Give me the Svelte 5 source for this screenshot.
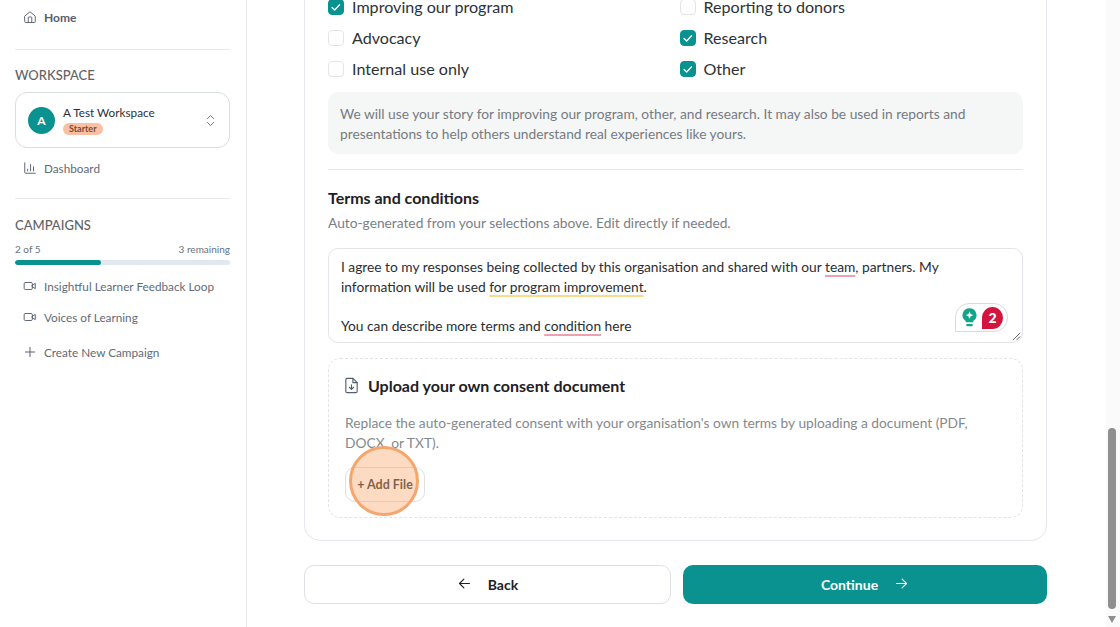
<script>
  const uses = [
    { label: 'Improving our program', checked: true },
    { label: 'Reporting to donors', checked: false },
    { label: 'Advocacy', checked: false },
    { label: 'Research', checked: true },
    { label: 'Internal use only', checked: false },
    { label: 'Other', checked: true }
  ];
  const campaigns = ['Insightful Learner Feedback Loop', 'Voices of Learning'];
</script>

<div class="page">
  <aside class="sidebar">
    <a class="nav home">
      <svg viewBox="0 0 24 24"><path d="M3 10.500 12 3l9 7.500V20a1.500 1.500 0 0 1-1.500 1.500h-15A1.500 1.500 0 0 1 3 20z" /><path d="M9 21.500V13a1 1 0 0 1 1-1h4a1 1 0 0 1 1 1v8.500" /></svg>
      <span>Home</span>
    </a>
    <hr class="rule first" />
    <h2>WORKSPACE</h2>
    <div class="workspace">
      <div class="avatar">A</div>
      <div class="ws-text">
        <div class="ws-name">A Test Workspace</div>
        <span class="badge">Starter</span>
      </div>
      <svg class="updown" viewBox="0 0 24 24"><path d="m7 9 5-5 5 5" /><path d="m7 15 5 5 5-5" /></svg>
    </div>
    <a class="nav dash">
      <svg viewBox="0 0 24 24"><path d="M3 3v16.500a1.500 1.500 0 0 0 1.500 1.500H21" /><path d="M8 17v-3" /><path d="M13 17V6" /><path d="M18 17V10" /></svg>
      <span>Dashboard</span>
    </a>
    <hr class="rule second" />
    <h2 class="campaigns-title">CAMPAIGNS</h2>
    <div class="quota"><span>2 of 5</span><span>3 remaining</span></div>
    <div class="bar"><div class="fill" style="width: 40%"></div></div>
    <div class="campaigns">
      {#each campaigns as name}
        <a class="nav camp">
          <svg viewBox="0 0 24 24"><rect x="2" y="6" width="14" height="12" rx="2" /><path d="m16 10.500 5-3v9l-5-3z" /></svg>
          <span>{name}</span>
        </a>
      {/each}
      <a class="nav create">
        <svg viewBox="0 0 24 24"><path d="M12 4v16" /><path d="M4 12h16" /></svg>
        <span>Create New Campaign</span>
      </a>
    </div>
  </aside>

  <main class="main">
    <section class="card">
      <div class="uses">
        {#each uses as use}
          <label class="use">
            <span class="box" class:on={use.checked}>
              {#if use.checked}
                <svg viewBox="0 0 16 16"><path d="m3.500 8.500 3 3 5.500-6" /></svg>
              {/if}
            </span>
            {use.label}
          </label>
        {/each}
      </div>

      <p class="info">We will use your story for improving our program, other, and research. It may also be used in reports and presentations to help others understand real experiences like yours.</p>

      <hr class="divider" />

      <h3>Terms and conditions</h3>
      <p class="sub">Auto-generated from your selections above. Edit directly if needed.</p>

      <div class="terms">
        <div>I agree to my responses being collected by this organisation and shared with our <span class="err">team</span>, partners. My information will be used <span class="warn">for program improvement</span>.</div>
        <div class="blank"></div>
        <div>You can describe more terms and <span class="err">condition</span> here</div>
        <div class="checker">
          <svg class="bulb" viewBox="0 0 16 20">
            <path d="M8 0a7.500 7.500 0 0 0-4 13.800V15h8v-1.200A7.500 7.500 0 0 0 8 0z" fill="#12a58c" />
            <path d="M8 3.500 9.200 6.300 12 7.500 9.200 8.700 8 11.500 6.800 8.700 4 7.500 6.800 6.300z" fill="#fff" />
            <rect x="4.500" y="17" width="7" height="2.200" rx="1" fill="#12a58c" />
          </svg>
          <span class="count">2</span>
        </div>
        <svg class="grip" viewBox="0 0 10 10"><path d="M9 1 1 9" /><path d="M9 5 5 9" /></svg>
      </div>

      <div class="upload">
        <div class="upload-head">
          <svg viewBox="0 0 24 24"><path d="M14 2H6a2 2 0 0 0-2 2v16a2 2 0 0 0 2 2h12a2 2 0 0 0 2-2V8z" /><path d="M14 2v6h6" /><path d="M12 11v6" /><path d="m9 14.500 3 3 3-3" /></svg>
          <h3>Upload your own consent document</h3>
        </div>
        <p class="upload-text">Replace the auto-generated consent with your organisation's own terms by uploading a document (PDF, DOCX, or TXT).</p>
        <button class="add">+ Add File</button>
        <div class="spot"></div>
      </div>
    </section>

    <div class="actions">
      <button class="back">
        <svg viewBox="0 0 24 24"><path d="M20 12H5" /><path d="m11 5-7 7 7 7" /></svg>
        Back
      </button>
      <button class="continue">
        Continue
        <svg viewBox="0 0 24 24"><path d="M4 12h15" /><path d="m13 5 7 7-7 7" /></svg>
      </button>
    </div>
  </main>

  <div class="scrollbar">
    <div class="thumb"></div>
    <div class="arrow"></div>
  </div>
</div>

<style>
  :global(body) {
    margin: 0;
    background: #fff;
    overflow: hidden;
  }

  .page {
    display: flex;
    height: 627px;
    overflow: hidden;
    font-family: Lato, "Open Sans", sans-serif;
    color: #1f2328;
  }

  .sidebar {
    width: 247px;
    flex: none;
    box-sizing: border-box;
    border-right: 1px solid #e8eaed;
    padding: 0 16px 0 15px;
  }

  .nav {
    display: flex;
    align-items: center;
    gap: 7px;
    padding-left: 8px;
    font-size: 11.750px;
    color: #626b78;
    white-space: nowrap;
  }

  .nav svg {
    width: 14px;
    height: 14px;
    flex: none;
    fill: none;
    stroke: #555e6b;
    stroke-width: 1.600;
    stroke-linecap: round;
    stroke-linejoin: round;
  }

  .home {
    height: 18px;
    margin-top: 8px;
    font-size: 12px;
    font-weight: 700;
    color: #555e6b;
  }

  .rule {
    border: 0;
    border-top: 1px solid #e8eaed;
    margin: 0;
  }

  .rule.first {
    margin-top: 23px;
  }

  .rule.second {
    margin-top: 21px;
  }

  h2 {
    margin: 17px 0 8px;
    font-size: 13px;
    line-height: 17px;
    font-weight: 500;
    color: #5f6368;
  }

  h2.campaigns-title {
    margin-top: 18px;
  }

  .workspace {
    display: flex;
    align-items: center;
    height: 56px;
    box-sizing: border-box;
    border: 1px solid #d8dee4;
    border-radius: 12px;
    padding: 0 11px 0 12px;
  }

  .avatar {
    width: 27px;
    height: 27px;
    border-radius: 50%;
    background: #0a9290;
    color: #fff;
    font-size: 12px;
    font-weight: 700;
    display: flex;
    align-items: center;
    justify-content: center;
    flex: none;
  }

  .ws-text {
    margin-left: 8px;
    flex: 1;
  }

  .ws-name {
    font-size: 11.750px;
    line-height: 15px;
    color: #2c3138;
  }

  .badge {
    display: block;
    width: fit-content;
    margin-top: 3px;
    padding: 0 6px;
    border-radius: 6px;
    background: #fbbfa3;
    color: #7a4a30;
    font-size: 9px;
    font-weight: 700;
    line-height: 12px;
  }

  .updown {
    width: 15px;
    height: 15px;
    fill: none;
    stroke: #6a7280;
    stroke-width: 1.500;
    stroke-linecap: round;
    stroke-linejoin: round;
  }

  .dash {
    height: 18px;
    margin-top: 11px;
  }

  .quota {
    display: flex;
    justify-content: space-between;
    font-size: 10px;
    line-height: 14px;
    color: #6a7280;
    margin-top: 3px;
  }

  .bar {
    height: 5px;
    margin-top: 4px;
    border-radius: 3px;
    background: #e2e8f0;
    overflow: hidden;
  }

  .fill {
    height: 100%;
    border-radius: 3px;
    background: #0a9290;
  }

  .campaigns {
    margin-top: 12px;
    display: flex;
    flex-direction: column;
  }

  .camp {
    height: 18px;
    margin-bottom: 13px;
  }

  .create {
    height: 18px;
    margin-top: 4px;
  }

  .main {
    flex: 1;
    min-width: 0;
    padding: 0 73px 0 57px;
    box-sizing: border-box;
  }

  .card {
    margin-top: -20px;
    height: 561px;
    box-sizing: border-box;
    border: 1px solid #e4e7eb;
    border-radius: 16px;
    padding: 14px 23px 0;
  }

  .uses {
    display: grid;
    grid-template-columns: 1fr 1fr;
    gap: 8px;
  }

  .use {
    display: flex;
    align-items: center;
    gap: 8px;
    height: 23px;
    font-size: 16.100px;
    color: #2d3238;
  }

  .box {
    width: 16px;
    height: 16px;
    box-sizing: border-box;
    border: 1px solid #e3e5e8;
    border-radius: 4px;
    display: flex;
    align-items: center;
    justify-content: center;
    flex: none;
  }

  .box.on {
    background: #0a9290;
    border-color: #0a9290;
  }

  .box svg {
    width: 14px;
    height: 14px;
    flex: none;
    fill: none;
    stroke: #fff;
    stroke-width: 1.500;
    stroke-linecap: round;
    stroke-linejoin: round;
  }

  .info {
    margin: 12px 0 0;
    background: #f5f6f6;
    border-radius: 10px;
    padding: 12px 12px;
    height: 38px;
    font-size: 13.750px;
    line-height: 20px;
    color: #757b82;
  }

  .divider {
    border: 0;
    border-top: 1px solid #e4e7eb;
    margin: 15px 0 0;
  }

  h3 {
    margin: 0;
    font-size: 16px;
    font-weight: 700;
    color: #1d2126;
  }

  .divider + h3 {
    margin-top: 17px;
    line-height: 21px;
  }

  .sub {
    margin: 5px 0 0;
    font-size: 13.750px;
    line-height: 19px;
    color: #7b8087;
  }

  .terms {
    position: relative;
    margin-top: 16px;
    height: 95px;
    box-sizing: border-box;
    border: 1px solid #e1e4e8;
    border-radius: 10px;
    padding: 8px 12px;
    font-size: 13.750px;
    line-height: 19.500px;
    color: #2a2e33;
  }

  .blank {
    height: 19.500px;
  }

  .err {
    text-decoration: underline 2px #ef9fb0;
    text-underline-offset: 3px;
    text-decoration-skip-ink: none;
  }

  .warn {
    text-decoration: underline 2px #f8dc8c;
    text-underline-offset: 3px;
    text-decoration-skip-ink: none;
  }

  .checker {
    position: absolute;
    right: 14px;
    bottom: 10px;
    width: 53px;
    height: 29px;
    box-sizing: border-box;
    border: 1px solid #d8dbde;
    border-radius: 14px 14px 14px 0;
    background: #fff;
    display: flex;
    align-items: center;
    padding-left: 6px;
    gap: 5px;
  }

  .bulb {
    width: 15px;
    height: 19px;
  }

  .count {
    width: 21px;
    height: 22px;
    border-radius: 50% 50% 50% 0;
    background: #d3143c;
    color: #fff;
    font-size: 14px;
    font-weight: 900;
    display: flex;
    align-items: center;
    justify-content: center;
  }

  .grip {
    position: absolute;
    right: 1px;
    bottom: 1px;
    width: 9px;
    height: 9px;
    fill: none;
    stroke: #555;
    stroke-width: 1;
  }

  .upload {
    position: relative;
    margin-top: 15px;
    height: 160px;
    box-sizing: border-box;
    border: 1px dashed #e1e4e8;
    border-radius: 12px;
    padding: 15px 16px;
  }

  .upload-head {
    display: flex;
    align-items: center;
    gap: 8px;
    height: 22px;
  }

  .upload-head svg {
    width: 17px;
    height: 17px;
    margin-left: -2px;
    fill: none;
    stroke: #555e6b;
    stroke-width: 1.600;
    stroke-linecap: round;
    stroke-linejoin: round;
  }

  .upload-text {
    margin: 17px 0 0;
    font-size: 13.750px;
    line-height: 20px;
    color: #84898f;
  }

  .add {
    display: block;
    margin-top: 14px;
    width: 80px;
    height: 35px;
    padding: 0;
    background: #fff;
    border: 1px solid #dde0e4;
    border-radius: 10px;
    font-family: inherit;
    font-size: 12.500px;
    font-weight: 700;
    color: #2a2e33;
  }

  .spot {
    position: absolute;
    left: 20px;
    top: 87px;
    width: 64px;
    height: 64px;
    border: 3px solid #f5a66c;
    border-radius: 50%;
    background: rgba(248, 170, 110, 0.42);
  }

  .actions {
    display: flex;
    gap: 12px;
    margin-top: 24px;
  }

  .actions button {
    height: 39px;
    border-radius: 10px;
    font-family: inherit;
    font-size: 14px;
    font-weight: 700;
    display: flex;
    align-items: center;
    justify-content: center;
    padding: 0;
  }

  .actions svg {
    width: 15px;
    height: 15px;
    margin-top: -3px;
    fill: none;
    stroke: currentColor;
    stroke-width: 1.800;
    stroke-linecap: round;
    stroke-linejoin: round;
  }

  .back {
    width: 367px;
    gap: 16px;
    background: #fff;
    border: 1px solid #dde0e4;
    color: #1d2126;
  }

  .continue {
    width: 364px;
    gap: 16px;
    background: #0a9290;
    border: 0;
    color: #fff;
  }

  .scrollbar {
    position: absolute;
    top: 0;
    right: 0;
    width: 14px;
    height: 627px;
    background: #fafafa;
  }

  .thumb {
    position: absolute;
    top: 428px;
    left: 2px;
    width: 8px;
    height: 181px;
    border-radius: 4px;
    background: #8f8f8f;
  }

  .arrow {
    position: absolute;
    top: 616px;
    left: 2px;
    width: 0;
    height: 0;
    border-left: 4.500px solid transparent;
    border-right: 4.500px solid transparent;
    border-top: 7px solid #8f8f8f;
  }
</style>
